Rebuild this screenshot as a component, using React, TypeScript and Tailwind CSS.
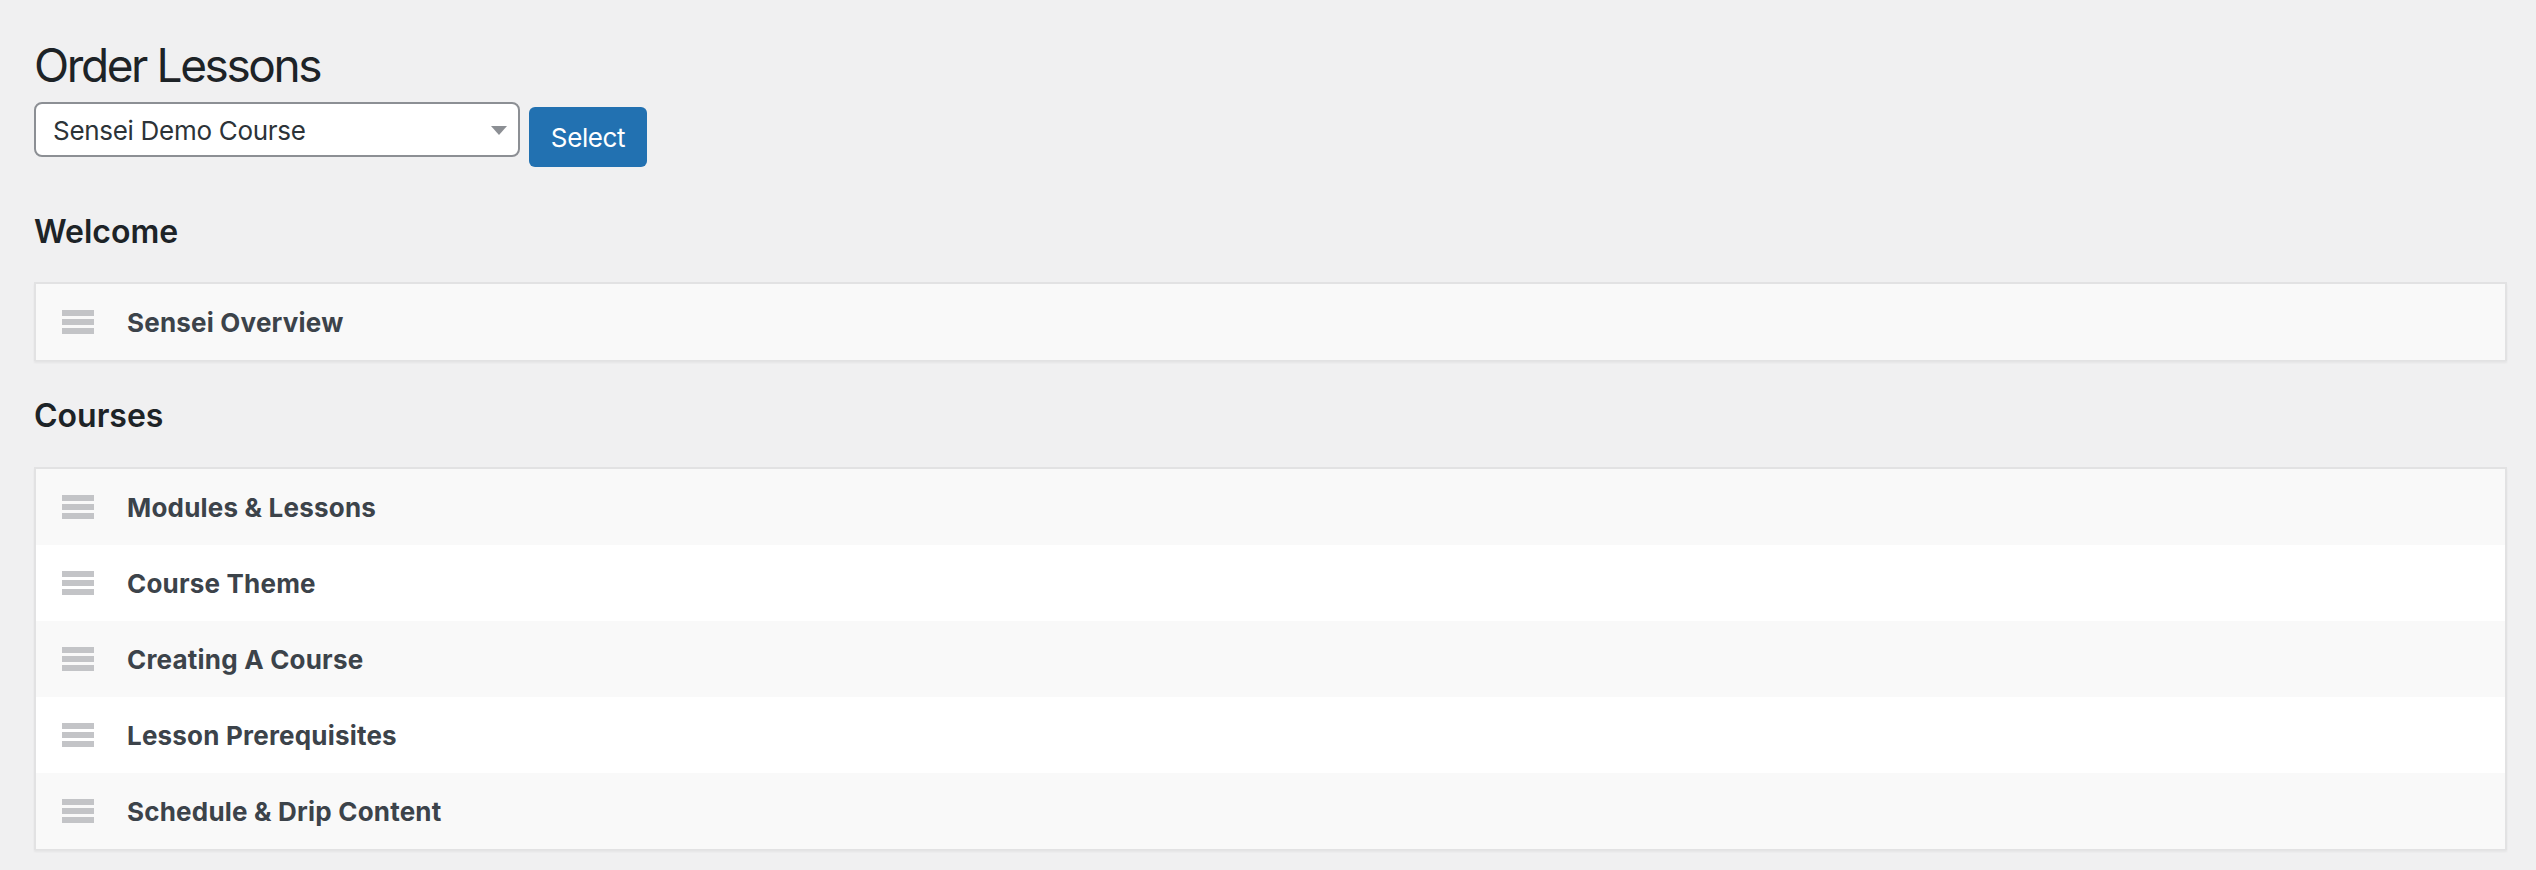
import React from "react";

type Lesson = { title: string };

const welcome: Lesson[] = [{ title: "Sensei Overview" }];

const courses: Lesson[] = [
  { title: "Modules & Lessons" },
  { title: "Course Theme" },
  { title: "Creating A Course" },
  { title: "Lesson Prerequisites" },
  { title: "Schedule & Drip Content" },
];

const DragHandle = () => (
  <div className="flex w-[32px] shrink-0 flex-col gap-[3px]">
    <span className="h-[6px] w-full bg-[#c3c4c7]" />
    <span className="h-[6px] w-full bg-[#c3c4c7]" />
    <span className="h-[6px] w-full bg-[#c3c4c7]" />
  </div>
);

const LessonList = ({ lessons }: { lessons: Lesson[] }) => (
  <ul className="border-x-2 border-t-2 border-b border-[#e2e2e3] bg-white shadow-[0_2px_2px_rgba(0,0,0,0.05)]">
    {lessons.map((lesson, i) => (
      <li
        key={lesson.title}
        className={`flex h-[76px] items-center gap-[33px] pl-[26px] ${i % 2 === 0 ? "bg-[#f9f9f9]" : "bg-white"}`}
      >
        <DragHandle />
        <span className="text-[26px] font-bold tracking-[0.2px] text-[#3c434a]">{lesson.title}</span>
      </li>
    ))}
  </ul>
);

export default function App() {
  return (
    <div className="min-h-[870px] bg-[#f0f0f1] pl-[34px] pr-[29px] pt-[35px] font-['Inter','Liberation_Sans',sans-serif] antialiased">
      <h1 className="text-[46px] leading-[60px] font-normal tracking-[-2.4px] text-[#1d2327]">Order Lessons</h1>

      {/* Course picker */}
      <div className="mt-[7px] flex items-start gap-[9px]">
        <div className="relative flex h-[55px] w-[486px] items-center rounded-[8px] border-2 border-[#8c8f94] bg-white pl-[17px]">
          <span className="mt-[2px] text-[26px] tracking-[-0.3px] text-[#2c3338]">Sensei Demo Course</span>
          <span className="absolute right-[11px] top-[22px] h-0 w-0 border-x-[8px] border-t-[9px] border-x-transparent border-t-[#8c8f94]" />
        </div>
        <button
          type="button"
          className="mt-[5px] flex h-[60px] w-[118px] items-center justify-center rounded-[6px] bg-[#2271b1] text-[26px] tracking-[-0.4px] text-white"
        >
          Select
        </button>
      </div>

      <h2 className="mt-[45px] text-[32px] leading-[40px] font-semibold text-[#1d2327]">Welcome</h2>
      <div className="mt-[30px]">
        <LessonList lessons={welcome} />
      </div>

      <h2 className="mt-[35px] text-[32px] leading-[40px] font-semibold text-[#1d2327]">Courses</h2>
      <div className="mt-[31px]">
        <LessonList lessons={courses} />
      </div>
    </div>
  );
}
